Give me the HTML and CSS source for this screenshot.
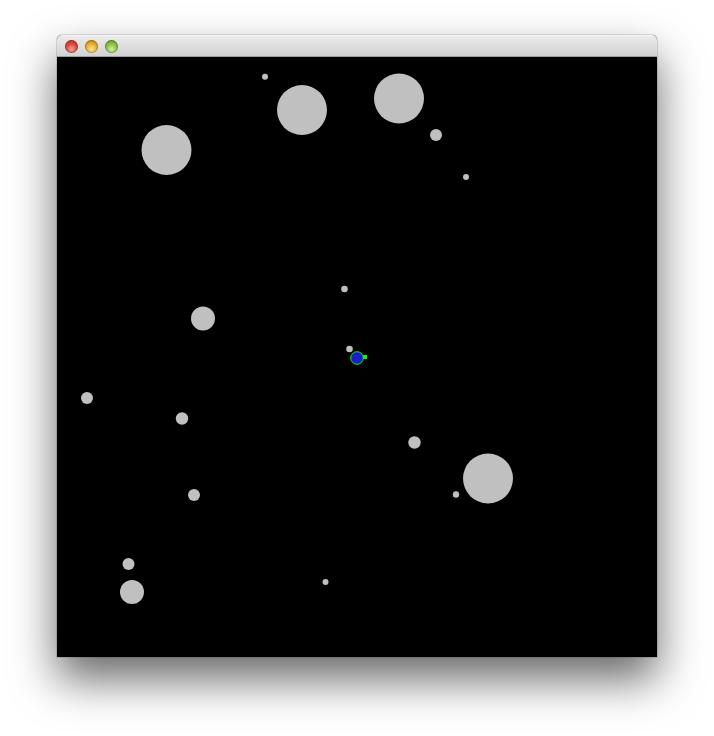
FILE: index.html
```html
<!DOCTYPE html>
<html>
<head>
<meta charset="utf-8">
<link rel="stylesheet" href="styles.css">
</head>
<body>
<div class="window">
  <div class="titlebar">
    <span class="light red"></span>
    <span class="light yellow"></span>
    <span class="light green"></span>
  </div>
  <svg class="canvas" width="600" height="600" viewBox="0 0 600 600">
    <rect width="600" height="600" fill="#000"/>
    <g fill="#c0c0c0">
      <circle cx="208" cy="19.7" r="3"/>
      <circle cx="245" cy="53" r="25"/>
      <circle cx="342" cy="41.5" r="25"/>
      <circle cx="379" cy="78" r="6"/>
      <circle cx="409" cy="120" r="3"/>
      <circle cx="109.5" cy="93" r="25"/>
      <circle cx="287.5" cy="232" r="3.3"/>
      <circle cx="146" cy="261.5" r="12"/>
      <circle cx="292.5" cy="292" r="3.3"/>
      <circle cx="30" cy="341" r="6"/>
      <circle cx="125" cy="361.5" r="6.2"/>
      <circle cx="357.5" cy="385.5" r="6.2"/>
      <circle cx="431" cy="421.5" r="25"/>
      <circle cx="399" cy="437.5" r="3.2"/>
      <circle cx="137" cy="438" r="6"/>
      <circle cx="71.5" cy="507" r="6"/>
      <circle cx="75" cy="535" r="12"/>
      <circle cx="268.5" cy="525" r="3"/>
    </g>
    <circle cx="300" cy="301" r="6.3" fill="#1c1ccc" stroke="#00ff00" stroke-width="1"/>
    <rect x="306" y="298" width="4" height="4" fill="#00ff00"/>
  </svg>
</div>
</body>
</html>
```
FILE: styles.css
```css
html, body {
  margin: 0;
  padding: 0;
  background: #ffffff;
}
body {
  padding: 35px 0 0 57px;
  min-height: 736px;
  box-sizing: border-box;
  font-family: "Liberation Sans", Arial, sans-serif;
}
.window {
  width: 600px;
  border-radius: 5px 5px 0 0;
  box-shadow: 0 22px 45px rgba(0, 0, 0, 0.6), 0 0 0 1px rgba(0,0,0,0.12);
  background: #000;
}
.titlebar {
  height: 22px;
  box-sizing: border-box;
  border-radius: 5px 5px 0 0;
  background: linear-gradient(#ebebeb, #d2d2d2);
  border-top: 1px solid #f6f6f6;
  border-bottom: 1px solid #9e9e9e;
  display: flex;
  align-items: center;
  gap: 7px;
  padding-left: 8px;
}
.light {
  width: 13px;
  height: 13px;
  border-radius: 50%;
  box-sizing: border-box;
  box-shadow: inset 0 0 0 1px rgba(0,0,0,0.25);
}
.red {
  background: radial-gradient(circle at 50% 70%, #f4a49c 0%, #dc4a40 45%, #a82a22 100%);
}
.yellow {
  background: radial-gradient(circle at 50% 70%, #fbe4a0 0%, #e8b02e 45%, #b07c12 100%);
}
.green {
  background: radial-gradient(circle at 50% 70%, #d4eea4 0%, #8cc248 45%, #5c8c22 100%);
}
.canvas {
  display: block;
}
```
